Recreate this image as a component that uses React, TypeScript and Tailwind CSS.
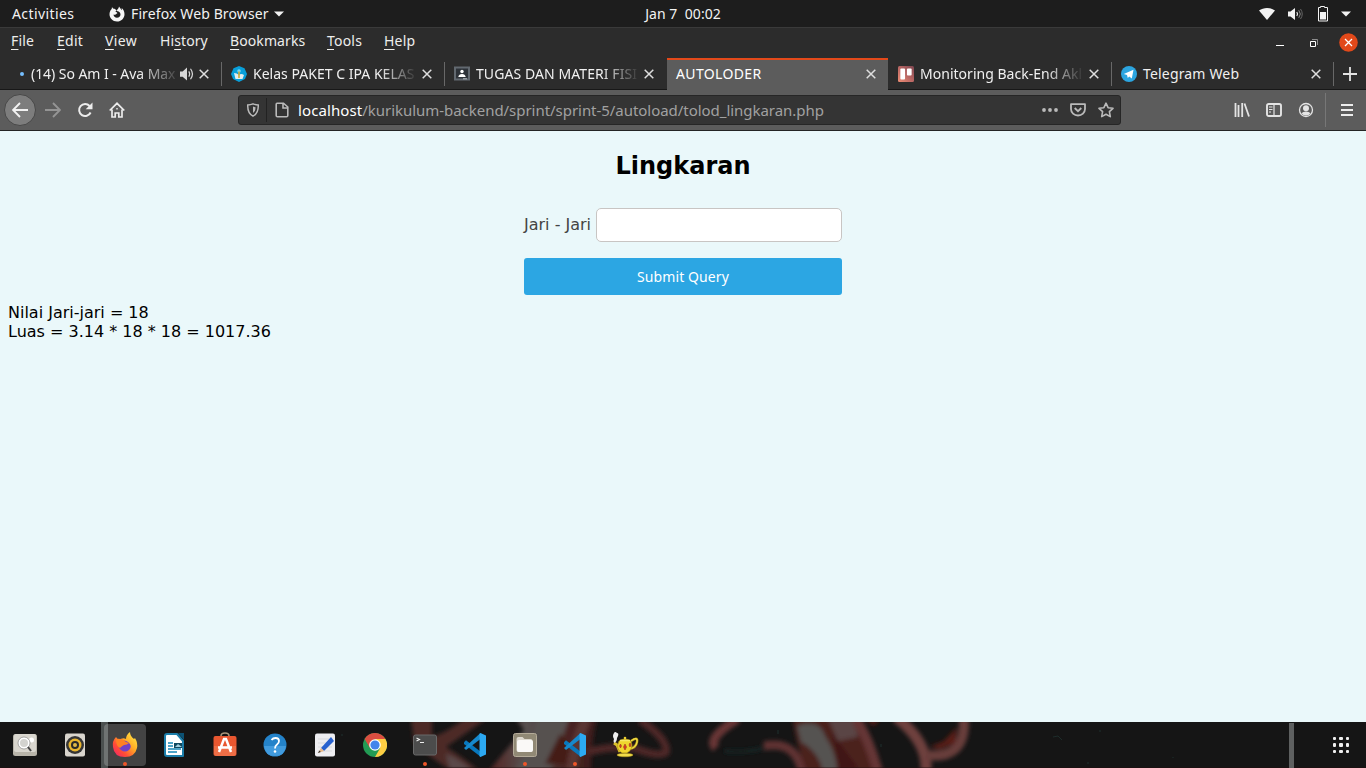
import type { ReactNode } from 'react';

const UI = "font-['Noto_Sans',sans-serif]";

function Icon({ size = 16, children, className = '' }: { size?: number; children: ReactNode; className?: string }) {
  return (
    <svg width={size} height={size} viewBox="0 0 16 16" fill="none" className={`shrink-0 ${className}`}>
      {children}
    </svg>
  );
}

function TopBar() {
  return (
    <div className="grid h-7 grid-cols-3 items-center border-b border-[#3a3a3a] bg-[#1d1d1d] text-[14px] leading-[26px] text-[#f2f2f2]">
      <div className="flex items-center pl-3">
        <span className="w-[97px] tracking-[0.4px]">Activities</span>
        <Icon className="mr-[6px]">
          <path d="M3 .9 2.7 3C1.2 4.4.5 6.2.5 8.3c0 4 3.3 7.2 7.5 7.2s7.500-3.200 7.500-7.300c0-2.700-1.200-5-3-6.200.4.800.5 1.500.4 2.200C12 3 11 1.800 10 .5c-.300 2-1.300 2.700-2.300 3.800l.8 1c1.700.200 3 1.400 3 3.100 0 1.900-1.500 3.300-3.500 3.300S4.500 10.300 4.500 8.400c.600.500 1.400.500 2 .1.900-.500 1.200-1.100 1.900-1.300-.2-.8-1-1.200-2-1.200.1-.700.700-1.100 1.200-1.600C6.500 3 5.700 2.600 4.600 2.700 3.900 2.300 3.300 1.800 3 .9Z" fill="#f4f4f4" />
        </Icon>
        <span className="tracking-[0.12px]">Firefox Web Browser</span>
        <svg width="10" height="6" viewBox="0 0 10 6" className="ml-[5px]"><path d="M0 .5h10L5 5.500z" fill="#f2f2f2" /></svg>
      </div>
      <div className="text-center whitespace-pre tracking-[0.05px]">Jan 7  00:02</div>
      <div className="flex items-center justify-end pr-[15px]">
        <Icon className="mr-3"><path d="M0 4.500C4.500 1 11.500 1 16 4.500L8 14z" fill="#f2f2f2" /></Icon>
        <Icon className="mr-3">
          <path d="M1 5.500h2.500L8 2v12l-4.500-3.500H1z" fill="#f2f2f2" />
          <path d="M9.800 6q1.500 2 0 4" stroke="#f2f2f2" strokeWidth="1.200" />
          <path d="M11.800 4.200q3 3.800 0 7.600" stroke="#888" />
          <path d="M13.500 3q3.500 5 0 10" stroke="#666" />
        </Icon>
        <Icon className="mr-[10px]">
          <path d="M5.500.500h4v1h3v13.500h-9V1.500h2z" stroke="#f2f2f2" />
          <path d="M5 6h6v7.500H5z" fill="#f2f2f2" />
        </Icon>
        <svg width="10" height="6" viewBox="0 0 10 6"><path d="M0 .5h10L5 5.500z" fill="#f2f2f2" /></svg>
      </div>
    </div>
  );
}

const MENU: [string, string, string, string][] = [
  ['', 'F', 'ile', 'w-[46px] tracking-[0.2px]'],
  ['', 'E', 'dit', 'w-[48px] tracking-[0.25px]'],
  ['', 'V', 'iew', 'w-[55px] tracking-[0.4px]'],
  ['Hi', 's', 'tory', 'w-[70px] tracking-[0.1px]'],
  ['', 'B', 'ookmarks', 'w-[97px] tracking-[0.1px]'],
  ['', 'T', 'ools', 'w-[57px] tracking-[0.2px]'],
  ['', 'H', 'elp', 'w-[40px] tracking-[0.2px]'],
];

function MenuBar() {
  return (
    <div className="flex h-[30px] items-start justify-between pl-[11px] text-[14px] leading-[26px] text-[#eeeeec]">
      <div className="flex">
        {MENU.map(([pre, key, post, width]) => (
          <span key={key + post} className={width}>
            {pre}
            <span className="underline decoration-1 underline-offset-[3px]">{key}</span>
            {post}
          </span>
        ))}
      </div>
      <div className="flex items-center pt-[5px] pr-2">
        <svg width="8" height="18" viewBox="0 0 8 18" className="mr-[26px]"><path d="M0 11h8v1H0z" fill="#fff" /></svg>
        <svg width="8" height="8" viewBox="0 0 8 8" fill="none" className="mr-[21px]">
          <path d="M.5 2.500h5v5h-5z" stroke="#fff" />
          <path d="M2 .5h5.500V6" stroke="#8e8e8e" />
        </svg>
        <svg width="19" height="19" viewBox="0 0 19 19">
          <circle cx="9.500" cy="9.500" r="9.300" fill="#e2491a" />
          <path d="m6 6 7 7m0-7-7 7" stroke="#fff" strokeWidth="1.300" />
        </svg>
      </div>
    </div>
  );
}

function CloseX() {
  return (
    <svg width="10" height="10" viewBox="0 0 10 10" className="shrink-0"><path d="m.7.7 8.600 8.600m0-8.600L.7 9.300" stroke="#dedede" strokeWidth="1.500" /></svg>
  );
}

const FADE = '[mask-image:linear-gradient(to_right,black_78%,transparent_102%)]';

function TabStrip() {
  return (
    <div className="flex h-8 text-[14px] leading-[30px] whitespace-nowrap text-[#f0f0f0]">
      <div className="flex w-[221px] items-center border-b border-[#181818] pl-5">
        <span className="size-1 rounded-full bg-[#75bfff]" />
        <span className="ml-[7px] w-[146px] tracking-[-0.05px] [mask-image:linear-gradient(to_right,black_74%,transparent_103%)]">(14) So Am I - Ava Max</span>
        <Icon size={14} className="mr-[5px] ml-[3px]">
          <path d="M0 5h3l5-4.500v15L3 11H0z" fill="#d7d7d7" />
          <path d="M10 5q2 3 0 6m2-9q4.500 6 0 12" stroke="#d7d7d7" strokeWidth="1.400" />
        </Icon>
        <CloseX />
      </div>
      <Divider />
      <div className="flex w-[222px] items-center border-b border-[#181818] pl-[9px]">
        <Icon>
          <path d="m8 0 5.500 2.200L16 8l-2 5-6 3-6-3-2-5 2.500-5.800z" fill="#089fda" />
          <path d="M3 7q3 0 5 2 2-2 5 0l-1.500 4h-7z" fill="#e2edf0" />
          <circle cx="8" cy="5" r="1.800" fill="#77d6ef" />
          <path d="M7.200 5.500h1.600V12H7.200z" fill="#cfab36" />
        </Icon>
        <span className={`ml-[6px] w-[162px] tracking-[0.02px] ${FADE}`}>Kelas PAKET C IPA KELAS</span>
        <span className="ml-[7px]"><CloseX /></span>
      </div>
      <Divider />
      <div className="flex w-[222px] items-center border-b border-[#181818] pl-[9px]">
        <Icon>
          <path d="M1 1.500h14v12H1z" fill="#2d3238" stroke="#626970" strokeWidth="2" />
          <circle cx="8" cy="5.500" r="1.700" fill="#fff" />
          <path d="M4.300 11q.5-3 3.700-3t3.700 3z" fill="#fff" />
          <path d="M9 12h4v1.500H9z" fill="#949ba0" />
        </Icon>
        <span className={`ml-[6px] w-[161px] tracking-[0.08px] ${FADE}`}>TUGAS DAN MATERI FISI</span>
        <span className="ml-[7px]"><CloseX /></span>
      </div>
      <div className="flex w-[221px] items-center justify-between border-t-2 border-[#e2491a] bg-[#5c5c5c] pr-[12px] pb-[2px] pl-[9px] text-white">
        <span className="tracking-[0.35px]">AUTOLODER</span>
        <CloseX />
      </div>
      <div className="flex w-[223px] items-center border-b border-[#181818] pl-[10px]">
        <svg width="16" height="16" viewBox="0 0 17 16" preserveAspectRatio="none" className="shrink-0">
          <defs>
            <linearGradient id="trello" x1="0" y1="1" x2="1" y2="0">
              <stop stopColor="#ee8d74" />
              <stop offset=".5" stopColor="#b86663" />
              <stop offset="1" stopColor="#7d454f" />
            </linearGradient>
          </defs>
          <rect width="17" height="16" rx="1.500" fill="url(#trello)" />
          <rect x="2.500" y="2.500" width="5" height="11" rx="1" fill="#fff" />
          <rect x="9.500" y="2.500" width="5" height="7" rx="1" fill="#fff" />
        </svg>
        <span className={`ml-[6px] w-[161px] tracking-[0.02px] ${FADE}`}>Monitoring Back-End Akh</span>
        <span className="ml-2"><CloseX /></span>
      </div>
      <Divider />
      <div className="flex w-[221px] items-center border-b border-[#181818] pl-[9px]">
        <Icon>
          <circle cx="8" cy="8" r="8" fill="#2ca5e0" />
          <path d="M2.800 8 12.500 3.700 10.800 12.500 8.200 10.500 6.800 12 6 9z" fill="#fff" />
        </Icon>
        <span className="ml-[6px] w-[168px] tracking-[0.17px]">Telegram Web</span>
        <CloseX />
      </div>
      <Divider />
      <div className="flex flex-1 items-center justify-center border-b border-[#181818]">
        <svg width="14" height="14" viewBox="0 0 14 14"><path d="M7 0v14M0 7h14" stroke="#e4e4e4" strokeWidth="1.800" /></svg>
      </div>
    </div>
  );
}

function Divider() {
  return (
    <div className="w-px shrink-0 border-b border-[#181818] pt-1 pb-[3px]">
      <div className="h-full bg-[#686868]" />
    </div>
  );
}

function NavBar() {
  return (
    <div className="flex h-[41px] items-center border-b border-[#242424] bg-[#5c5c5c] pl-1">
      <div className="flex size-8 items-center justify-center rounded-full border border-[#484848] bg-[#7d7d7d]">
        <Icon><path d="M8 1 1 8l7 7M1 8h15" stroke="#f2f2f2" strokeWidth="1.900" /></Icon>
      </div>
      <Icon className="ml-[9px]"><path d="m8 1 7 7-7 7m7-7H0" stroke="#949494" strokeWidth="1.900" /></Icon>
      <Icon className="ml-4">
        <path d="M13.600 10.500A6 6 0 1 1 12.600 4" stroke="#ececec" strokeWidth="2" />
        <path d="M15.500.500v6.800H8.700z" fill="#ececec" />
      </Icon>
      <Icon className="ml-4">
        <path d="M.7 8.500 8 1.300l7.300 7.200M3 7.500v7.500h3.200v-4h3.600v4H13V7.500" stroke="#ececec" strokeWidth="1.700" />
        <path d="M7.300 6h1.400v1.500H7.300z" fill="#ececec" />
      </Icon>
      <div className="ml-[113px] flex h-[30px] w-[883px] items-center rounded-[3px] border border-[#262626] bg-[#343434] pl-[7px]">
        <Icon size={14}>
          <path d="M2 2.300q3-.2 6-1.300 3 1.100 6 1.300C14.300 9 12 13 8 15 4 13 1.700 9 2 2.300Z" stroke="#bababa" strokeWidth="1.700" />
          <path d="M8 4q1.500.700 3 .8Q11 9 8 11.500z" fill="#bababa" />
        </Icon>
        <div className="ml-[6px] h-[24px] w-px bg-[#222]" />
        <Icon className="ml-[7px]">
          <path d="M3 1.200h6.500L13.800 5v8.500q0 1.300-1.300 1.300h-9q-1.300 0-1.300-1.300V2.500q0-1.300.8-1.300ZM9 1v5h5" stroke="#bababa" strokeWidth="1.600" />
        </Icon>
        <div className="ml-2 w-[744px] text-[15px] leading-7 tracking-[-0.04px] text-[#a1a1a1]">
          <span className="tracking-[0.1px] text-white">localhost</span>/kurikulum-backend/sprint/sprint-5/autoload/tolod_lingkaran.php
        </div>
        <Icon><circle cx="2" cy="8" r="1.900" fill="#bababa" /><circle cx="8" cy="8" r="1.900" fill="#bababa" /><circle cx="14" cy="8" r="1.900" fill="#bababa" /></Icon>
        <Icon className="ml-3">
          <path d="M1 2.200h14V7a7 6.500 0 0 1-14 0z" stroke="#bababa" strokeWidth="1.800" strokeLinejoin="round" />
          <path d="m4.700 6 3.300 3.200L11.300 6" stroke="#bababa" strokeWidth="1.800" />
        </Icon>
        <Icon className="ml-3"><path d="m8 1.200 2.100 4.500 4.900.600-3.600 3.400.9 4.900L8 12.200l-4.300 2.400.9-4.900L1 6.300l4.900-.6z" stroke="#bababa" strokeWidth="1.600" strokeLinejoin="round" /></Icon>
      </div>
      <div className="flex h-full flex-1 items-center justify-end">
        <Icon className="mr-4"><path d="M1.500 1v14M4.500 3v12M8.200 1v14M10.500 1.500 15 14.500" stroke="#e4e4e4" strokeWidth="1.800" /></Icon>
        <Icon className="mr-4">
          <rect x="1" y="2" width="14" height="12" rx="1.800" stroke="#e4e4e4" strokeWidth="1.900" />
          <path d="M8 2v12M3 5h3.500M3 7.500h3.500M3 10h2" stroke="#e4e4e4" strokeWidth="1.200" />
        </Icon>
        <Icon className="mr-[11px]">
          <circle cx="8" cy="8" r="6.500" stroke="#e4e4e4" strokeWidth="1.300" />
          <circle cx="8" cy="6.200" r="3" fill="#e4e4e4" />
          <path d="M3.500 11.300Q5 9.500 8 9.500t4.500 1.800Q11 13.500 8 13.500t-4.500-2.200Z" fill="#e4e4e4" />
        </Icon>
        <div className="h-[34px] w-px bg-[#777]" />
        <div className="flex w-[40px] pl-[15px]">
          <svg width="12" height="12" viewBox="0 0 12 12"><path d="M0 1h12M0 6h12M0 11h12" stroke="#ececec" strokeWidth="1.800" /></svg>
        </div>
      </div>
    </div>
  );
}

function WebPage() {
  return (
    <main className="h-[591px] bg-[#eaf8fa] pt-[21px] font-['DejaVu_Sans',sans-serif] text-[16px] leading-[19px] text-black">
      <h2 className="text-center text-[24px] leading-7 font-bold">Lingkaran</h2>
      <form className="mx-auto mt-7 w-[318px]">
        <div className="flex items-center justify-between">
          <label className="pb-px text-[#444]">Jari - Jari</label>
          <input className="h-[34px] w-[246px] rounded-[5px] border border-[#c8c5c3] bg-white" />
        </div>
        <button type="button" className="mt-4 block h-[37px] w-full rounded-[3px] bg-[#2ca6e3] font-['Noto_Sans',sans-serif] text-[14px] tracking-[0.1px] text-white">
          Submit Query
        </button>
      </form>
      <div className="mt-2 pl-2">
        <p>Nilai Jari-jari = 18</p>
        <p>Luas = 3.14 * 18 * 18 = 1017.36</p>
      </div>
    </main>
  );
}

function Wallpaper() {
  return (
    <svg className="absolute inset-0" width="1366" height="46" viewBox="0 0 1366 46" fill="none">
      <defs>
        <filter id="soft" x="-10%" y="-30%" width="120%" height="160%"><feGaussianBlur stdDeviation="2" /></filter>
        <linearGradient id="flesh" x1="0" y1="0" x2="1" y2="0">
          <stop stopColor="#542422" />
          <stop offset=".35" stopColor="#565150" />
          <stop offset=".7" stopColor="#4a2522" />
          <stop offset="1" stopColor="#3c1c1b" />
        </linearGradient>
      </defs>
      <rect width="1366" height="46" fill="#151515" />
      <g filter="url(#soft)">
        <path d="M411-3 414 20Q428 34 450 48h28Q464 36 446 25 462 14 486-3h-22Q446 11 432 15L432-3Z" fill="#4d2928" />
        <path d="M446 32q12 4 26 16h-22z" fill="#5a4a49" />
        <path d="M516-3 524 8Q508 25 489 49h102q0-28 6-52Z" fill="url(#flesh)" />
        <path d="M536-3 530 24 514 49h36l19-52Z" fill="#565150" />
        <path d="M560 12 545 42h24l1-20Z" fill="#451a18" />
        <path d="M586-3Q575 20 571 50" stroke="#5a3433" strokeWidth="11" />
        <path d="M588 30q20-6 46-4 26 10 32 4 2-13-26-32" stroke="#4e2625" strokeWidth="8" />
        <path d="M738-3Q706 16 716 26" stroke="#673635" strokeWidth="9" />
        <path d="M724 29q26 2 42-4" stroke="#182826" strokeWidth="3" />
        <path d="M764 24q32-6 38 26" stroke="#5f3030" strokeWidth="9" />
        <path d="M793-4q1 20 14 54h66Q867 22 860-4Z" fill="#4b211f" />
        <path d="M797 4q22-8 28 10 12 18 12 36h-14q-4-20-22-30Z" fill="#555251" />
        <path d="M828-3h26l4 18-20 4Z" fill="#5a4544" />
        <path d="m831 10 28 37h-20q-2-18-8-37Z" fill="#401714" />
        <path d="M856-3Q869 17 878 50" stroke="#653434" strokeWidth="10" />
        <path d="M864-3h16l-6 7z" fill="#551a14" />
        <path d="M896-5q32 25 30 54" stroke="#6e403e" strokeWidth="11" />
        <path d="M926 33q40 5 38-36" stroke="#683c3b" strokeWidth="10" />
        <path d="m929 25 15-6 13-14-2 16-15 6z" fill="#5a1d18" />
      </g>
      <path d="M0 45.500h1366" stroke="#260c0d" opacity=".4" />
      <path d="M342 12v2M778 8v4M881 22v3M1100 8v2M1088 40v2M1173 35v1" stroke="#254440" opacity=".6" />
      <path d="M1053 15l5-1 4 4" stroke="#254440" opacity=".5" />
      <rect x="101" width="7" height="46" fill="#4b504f" />
      <rect x="1289" y="1" width="5" height="45" fill="#5e6060" />
    </svg>
  );
}

function CodeLogo() {
  return (
    <svg width="24" height="24" viewBox="0 0 24 24">
      <path d="M1 9.200 3 7.300 18 19v5L1 11z" fill="#0878bd" />
      <path d="M1 15 17.500 0v6L3 17z" fill="#1689cc" />
      <path d="m17.500 0 5.500 2.500v19L17.500 24l-1-.800V.8z" fill="#2ca9f2" />
    </svg>
  );
}

const DOCK: { id: string; running?: boolean; active?: boolean; art: ReactNode }[] = [
  {
    id: 'viewer',
    art: <svg width="24" height="24" viewBox="0 0 24 24"><rect y="1" width="24" height="22" rx="2.500" fill="#b8b4a9" /><rect x="1" y="1" width="22" height="18" rx="2" fill="#d9d6ce" /><circle cx="18.500" cy="7" r="2.500" fill="#fff" /><circle cx="11" cy="10" r="5" fill="#d3d3cf" stroke="#fff" strokeWidth="2" /><circle cx="11" cy="10" r="6" fill="none" stroke="#777" strokeWidth=".6" /><path d="m15 14 3 4" stroke="#444" strokeWidth="2" /></svg>,
  },
  {
    id: 'music',
    art: <svg width="24" height="24" viewBox="0 0 24 24"><rect x="2" y=".5" width="20" height="23" rx="2" fill="#d9d5cd" /><circle cx="12" cy="12" r="9" fill="#353535" /><circle cx="12" cy="12" r="6.500" fill="#e9b52e" /><circle cx="12" cy="12" r="4" fill="#292929" /><circle cx="12" cy="12" r="2" fill="#deb748" /></svg>,
  },
  {
    id: 'firefox',
    running: true,
    active: true,
    art: <svg width="26" height="26" viewBox="0 0 26 26"><defs><linearGradient id="fox" x1="1" y1="0" x2="0" y2="1"><stop stopColor="#fff44f" /><stop offset=".4" stopColor="#ffac25" /><stop offset=".7" stopColor="#ff4b36" /><stop offset="1" stopColor="#eb1d75" /></linearGradient></defs><path d="M4 5 6.500 8Q11 5 14 7q0-4 4-7 0 4 4 7l1-1q3 5 2 10-2 9-12 9Q2 25 1 15 0 9 4 5Z" fill="url(#fox)" /><path d="M8 10q4-3 8 0 5 4 1 8-4 3-8 0-4-3-1-8Z" fill="#7141c6" /><path d="M4 7q6-1 10 3l3 1q-2 2-5 2-2 1-4 3Q4 14 4 7Z" fill="#ff8023" /></svg>,
  },
  {
    id: 'writer',
    art: <svg width="24" height="24" viewBox="0 0 24 24"><path d="M4 1h10l6 7v15H4q-2 0-2-2V3q0-2 2-2Z" fill="#fff" stroke="#1c7eaa" strokeWidth="2" strokeLinejoin="round" /><path d="M20 8v15" stroke="#1c7eaa" strokeWidth="2" /><path d="M15 0h6v7z" fill="#0c5274" /><path d="M5 10h5M5 13h5M5 16h13M5 19h9" stroke="#1687b6" strokeWidth="1.400" /><path d="M11 10h8v5h-8z" fill="#10485f" /><path d="m12 14 3-3 4 3z" fill="#a3cede" /></svg>,
  },
  {
    id: 'software',
    art: <svg width="24" height="26" viewBox="0 0 24 26"><path d="M8 4q0-3 4-3t4 3" fill="none" stroke="#a99679" strokeWidth="1.500" /><rect x=".5" y="4" width="23" height="20" rx="2" fill="#e95730" /><path d="M1 14h22v7q0 3-3 3H4q-3 0-3-3z" fill="#f28259" opacity=".55" /><path d="m6 20 5-13h2l5 13M5 15.500h14" fill="none" stroke="#fff" strokeWidth="2.500" /></svg>,
  },
  {
    id: 'help',
    art: <svg width="24" height="24" viewBox="0 0 24 24"><circle cx="12" cy="12" r="11.500" fill="#2483ca" /><path d="M1 13h22q-1 10-11 10T1 13Z" fill="#419bde" /><path d="M8.500 7Q10 5 12.500 5 16 5 16 8q0 2-2 3.500-2 1.300-2 4" fill="none" stroke="#fff" strokeWidth="1.800" /><circle cx="12" cy="18.500" r="1.300" fill="#fff" /></svg>,
  },
  {
    id: 'editor',
    art: <svg width="24" height="24" viewBox="0 0 24 24"><rect x="2" y=".5" width="20" height="23" rx="2" fill="#eeeef1" /><path d="M5 6h14M5 10h14M5 14h14M5 18h14" stroke="#d9dadd" /><path d="m8 15 10-11 3 4-10 10z" fill="#2862cf" /><path d="m8 15 3 3-6 2z" fill="#eab988" /><path d="m6.500 17.500 1.300 1.500-3 1z" fill="#333" /></svg>,
  },
  {
    id: 'chrome',
    art: <svg width="24" height="24" viewBox="0 0 24 24"><circle cx="12" cy="12" r="12" fill="#229b54" /><path d="M1.600 6A12 12 0 0 1 22.400 6H12L7 15Z" fill="#db4e40" /><path d="M22.400 6A12 12 0 0 1 12 24l5.200-9L12 6Z" fill="#fdcd43" /><circle cx="12" cy="12" r="5.800" fill="#fff" /><circle cx="12" cy="12" r="4.600" fill="#4385eb" /></svg>,
  },
  {
    id: 'terminal',
    running: true,
    art: <svg width="24" height="24" viewBox="0 0 24 24"><rect x=".5" y="2" width="23" height="20" rx="2" fill="#4c4c4c" stroke="#696969" /><path d="m3.500 5 3 1.500-3 1.500M7 9.500h4" fill="none" stroke="#eee" strokeWidth="1.100" /></svg>,
  },
  { id: 'code', art: <CodeLogo /> },
  {
    id: 'files',
    running: true,
    art: <svg width="24" height="24" viewBox="0 0 24 24"><rect x=".5" y=".5" width="23" height="23" rx="2" fill="#918975" stroke="#b4ab98" /><path d="M3.500 6q0-2 2-2h4l2 2h6q2 0 2 2v9q0 2-2 2h-12q-2 0-2-2z" fill="#ddd8ce" /><rect x="4" y="7" width="16" height="12" rx="2" fill="#faf9f7" /></svg>,
  },
  { id: 'code-window', running: true, art: <CodeLogo /> },
  {
    id: 'teapot',
    art: <svg width="28" height="28" viewBox="0 0 28 28"><path d="M20 10q7-5 6 1-1 6-8 7" fill="none" stroke="#b39c19" strokeWidth="2.500" /><path d="M20 10q7-5 6 1-1 6-8 7" fill="none" stroke="#f4dd47" strokeWidth="1.300" /><path d="m3 12 3 2 3 7" fill="none" stroke="#dbc12b" strokeWidth="3" /><path d="M8 10q6-4 12 0 3 8-4 12h-5q-7-4-3-12Z" fill="#f0d52e" stroke="#a78d12" strokeWidth=".6" /><path d="M9 9.500h10" stroke="#f8e764" strokeWidth="1.500" /><ellipse cx="14" cy="24" rx="8" ry="1.800" fill="#f0dc4a" stroke="#a78d12" strokeWidth=".5" /><circle cx="14" cy="7" r="1.300" fill="#eace31" /><path d="m9.500 13 1 2-1 2-1-2zm4.500 0 1.500 3-1.500 3-1.500-3zm5-1 1 2-1 2-1-2z" fill="#df352a" stroke="#9b3d16" strokeWidth=".6" /><path d="M3 2q1-2 3 0 2 0 1 3l-1 2q0 4-3 5-1-2 0-4-2-3 0-6Z" fill="#eee" /></svg>,
  },
];

function Dock() {
  return (
    <div className="relative h-[46px] overflow-hidden">
      <Wallpaper />
      <div className="relative flex h-full items-center justify-between">
        <div className="flex h-full">
          {DOCK.map((app) => (
            <div key={app.id} className="flex h-full w-[50px] items-center justify-center">
              <div className={`relative flex h-[42px] w-[42px] items-center justify-center rounded-[4px] ${app.active ? 'bg-white/20' : ''}`}>
                {app.art}
                {app.running && <span className="absolute bottom-0 left-[19px] size-1 rounded-full bg-[#ee5629]" />}
              </div>
            </div>
          ))}
        </div>
        <div className="grid grid-cols-3 gap-[3px] pr-[17px]">
          {Array.from({ length: 9 }, (_, i) => <span key={i} className="size-[3.500px] rounded-[1px] bg-[#eee]" />)}
        </div>
      </div>
    </div>
  );
}

export default function App() {
  return (
    <div className={`h-[768px] w-[1366px] overflow-hidden bg-[#2c2c2c] ${UI}`}>
      <TopBar />
      <MenuBar />
      <TabStrip />
      <NavBar />
      <WebPage />
      <Dock />
    </div>
  );
}
